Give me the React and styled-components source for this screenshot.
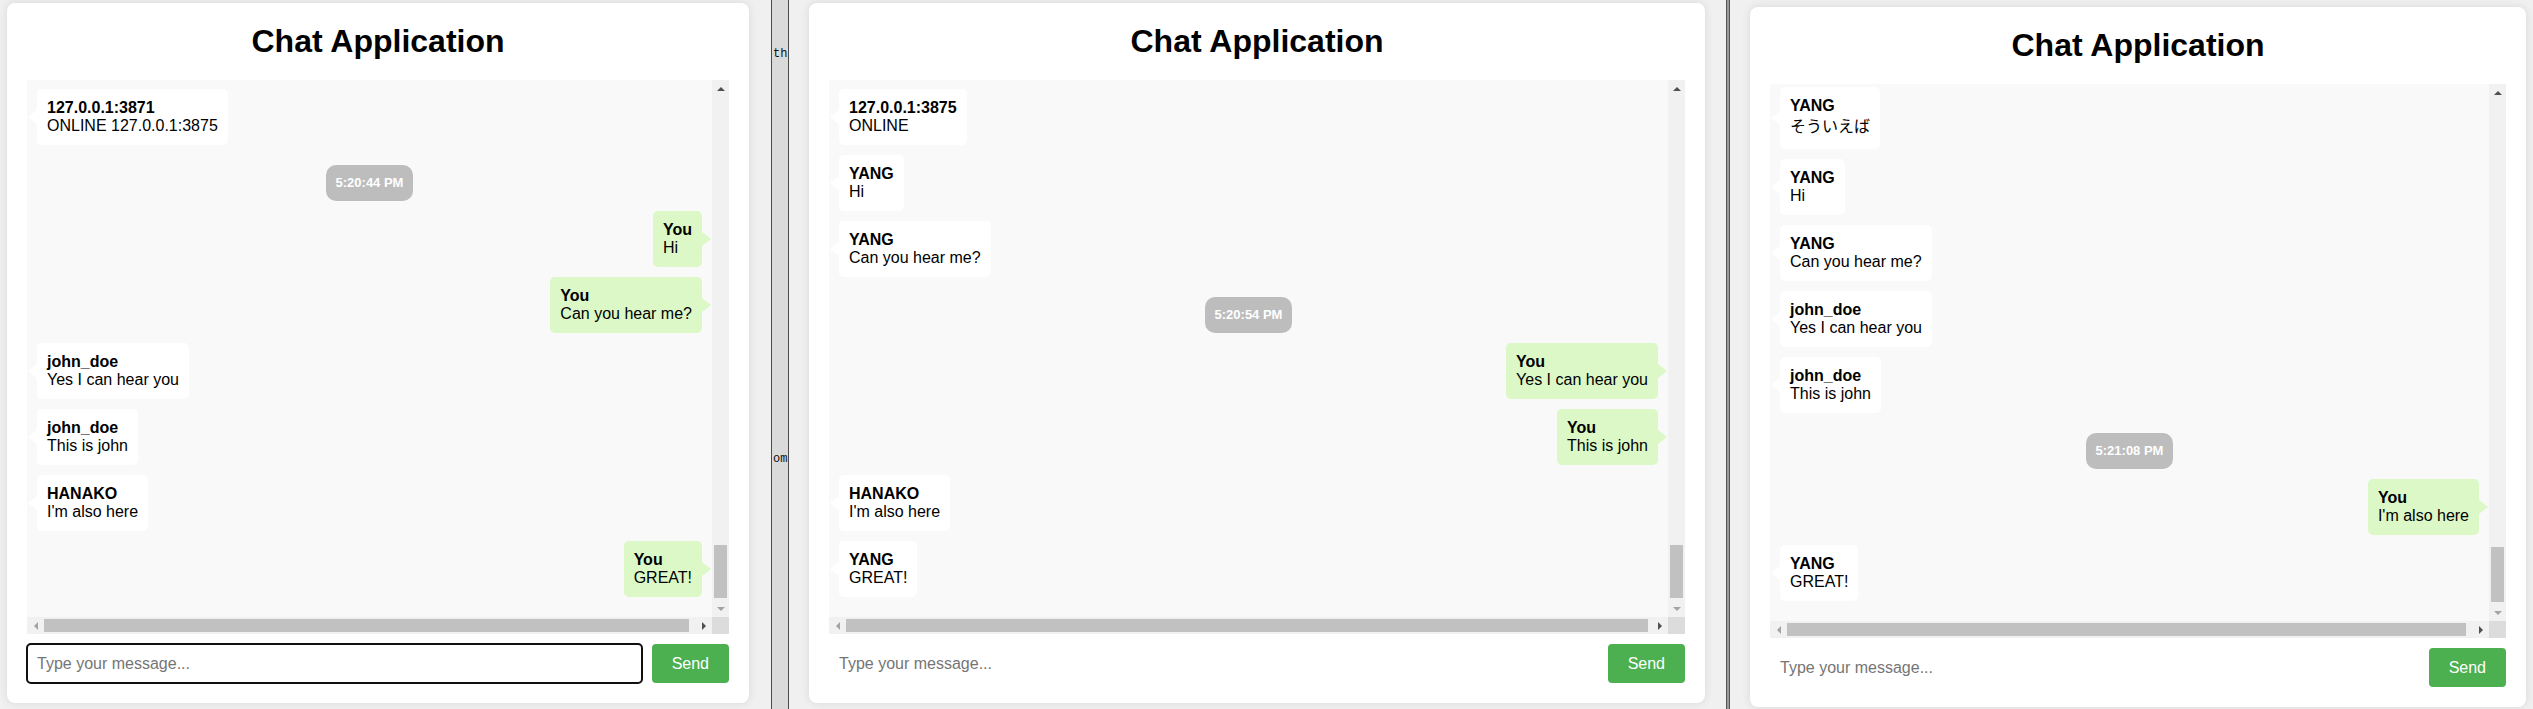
import React from 'react';
import styled, { createGlobalStyle } from 'styled-components';

const GlobalStyle = createGlobalStyle`
  html, body {
    margin: 0;
    padding: 0;
  }
  body {
    font-family: "Liberation Sans", Arial, "Noto Sans CJK JP", sans-serif;
    background: #f0f0f0;
  }
`;

const Desktop = styled.div`
  display: flex;
  width: 2533px;
  height: 709px;
  overflow: hidden;
`;

const Window = styled.div`
  flex: none;
  box-sizing: border-box;
  width: ${p => p.$width}px;
  padding: ${p => p.$top}px 0 0 ${p => p.$left}px;
  background: #f0f0f0;
`;

const EditorStrip = styled.div`
  flex: none;
  box-sizing: border-box;
  width: 18px;
  border-left: 1px solid #4a4a4a;
  border-right: 1px solid #4a4a4a;
  background: #dadada;
  overflow: hidden;
  display: flex;
  flex-direction: column;
  padding: 46px 0 0 1px;
  font-family: "Liberation Mono", "DejaVu Sans Mono", monospace;
  font-size: 12px;
  line-height: 17px;
  color: #111;
  white-space: nowrap;
`;

const Snippet = styled.span`
  margin-top: ${p => p.$gap || 0}px;
`;

const Divider = styled.div`
  flex: none;
  box-sizing: border-box;
  width: 4px;
  border-left: 1px solid #555;
  border-right: 1px solid #555;
  background: #9a9a9a;
`;

const Card = styled.div`
  box-sizing: border-box;
  width: ${p => p.$width}px;
  height: 700px;
  padding: 20px;
  background: #fff;
  border-radius: 8px;
  box-shadow: 0 0 10px rgba(0, 0, 0, 0.1);
  display: flex;
  flex-direction: column;
`;

const Title = styled.h1`
  margin: 0 0 20px;
  font-size: 32px;
  line-height: 37px;
  font-weight: bold;
  text-align: center;
  color: #000;
`;

const ChatBox = styled.div`
  flex: 1;
  min-height: 0;
  display: grid;
  grid-template-columns: 1fr 17px;
  grid-template-rows: 1fr 17px;
  background: #f9f9f9;
`;

const MessageList = styled.div`
  min-height: 0;
  overflow: hidden;
  display: flex;
  flex-direction: column;
  justify-content: flex-end;
  padding: 10px;
`;

const Bubble = styled.div`
  position: relative;
  flex: none;
  align-self: ${p => (p.$mine ? 'flex-end' : 'flex-start')};
  margin-bottom: 10px;
  padding: 10px;
  border-radius: 5px;
  background: ${p => (p.$mine ? '#dcf8c6' : '#fff')};
  font-size: 16px;
  line-height: 18px;
  color: #000;

  &::after {
    content: '';
    position: absolute;
    top: 50%;
    transform: translateY(-50%);
    border-top: 7px solid transparent;
    border-bottom: 7px solid transparent;
    ${p =>
      p.$mine
        ? 'right: -9px; border-left: 9px solid #dcf8c6;'
        : 'left: -9px; border-right: 9px solid #fff;'}
  }
`;

const Sender = styled.div`
  font-weight: bold;
`;

const Text = styled.div`
  line-height: ${p => (p.$cjk ? '24px' : '18px')};
`;

const TimeStamp = styled.div`
  flex: none;
  align-self: center;
  margin: 10px 0;
  padding: 10px;
  border-radius: 10px;
  background: #bdbdbd;
  color: #fff;
  font-size: 13px;
  line-height: 16px;
  font-weight: bold;
`;

const VScroll = styled.div`
  display: flex;
  flex-direction: column;
  background: #f1f1f1;
`;

const HScroll = styled.div`
  display: flex;
  background: #f1f1f1;
`;

const Corner = styled.div`
  background: #dcdcdc;
`;

const ArrowButton = styled.div`
  flex: none;
  width: 17px;
  height: 17px;
  display: flex;
  align-items: center;
  justify-content: center;

  &::before {
    content: '';
    width: 0;
    height: 0;
    ${p => {
      const c = p.$disabled ? '#a3a3a3' : '#505050';
      if (p.$dir === 'up') return `border-left: 4px solid transparent; border-right: 4px solid transparent; border-bottom: 4px solid ${c};`;
      if (p.$dir === 'down') return `border-left: 4px solid transparent; border-right: 4px solid transparent; border-top: 4px solid ${c};`;
      if (p.$dir === 'left') return `border-top: 4px solid transparent; border-bottom: 4px solid transparent; border-right: 4px solid ${c};`;
      return `border-top: 4px solid transparent; border-bottom: 4px solid transparent; border-left: 4px solid ${c};`;
    }}
  }
`;

const VTrack = styled.div`
  flex: 1;
  display: flex;
  flex-direction: column;
  justify-content: flex-end;
  padding: 0 2px 2px;
`;

const VThumb = styled.div`
  height: ${p => p.$size}px;
  background: #c1c1c1;
`;

const HTrack = styled.div`
  flex: 1;
  display: flex;
  padding: 2px ${p => p.$rest}px 2px 0;
`;

const HThumb = styled.div`
  flex: 1;
  background: #c1c1c1;
`;

const Composer = styled.div`
  display: flex;
  gap: 10px;
  margin-top: 10px;
`;

const MessageInput = styled.input`
  flex: 1;
  min-width: 0;
  padding: 10px;
  border: none;
  border-radius: 4px;
  font-family: inherit;
  font-size: 16px;
  line-height: 19px;
  color: #000;
  background: #fff;
  outline: ${p => (p.$focused ? '2px solid #101010' : 'none')};
  outline-offset: -1px;

  &::placeholder {
    color: #757575;
  }
`;

const SendButton = styled.button`
  flex: none;
  padding: 10px 20px;
  border: none;
  border-radius: 4px;
  background: #4caf50;
  color: #fff;
  font-family: inherit;
  font-size: 16px;
  line-height: 18px;
  cursor: pointer;
`;

const panels = [
  {
    win: { width: 771, left: 7, top: 3 },
    card: 742,
    thumb: 53,
    rest: 6,
    focused: true,
    items: [
      { sender: '127.0.0.1:3871', text: 'ONLINE 127.0.0.1:3875' },
      { time: '5:20:44 PM' },
      { mine: true, sender: 'You', text: 'Hi' },
      { mine: true, sender: 'You', text: 'Can you hear me?' },
      { sender: 'john_doe', text: 'Yes I can hear you' },
      { sender: 'john_doe', text: 'This is john' },
      { sender: 'HANAKO', text: "I'm also here" },
      { mine: true, sender: 'You', text: 'GREAT!' },
    ],
  },
  {
    win: { width: 937, left: 20, top: 3 },
    card: 896,
    thumb: 53,
    rest: 3,
    items: [
      { sender: '127.0.0.1:3875', text: 'ONLINE' },
      { sender: 'YANG', text: 'Hi' },
      { sender: 'YANG', text: 'Can you hear me?' },
      { time: '5:20:54 PM' },
      { mine: true, sender: 'You', text: 'Yes I can hear you' },
      { mine: true, sender: 'You', text: 'This is john' },
      { sender: 'HANAKO', text: "I'm also here" },
      { sender: 'YANG', text: 'GREAT!' },
    ],
  },
  {
    win: { width: 803, left: 20, top: 7 },
    card: 776,
    thumb: 55,
    rest: 6,
    items: [
      { sender: 'YANG', text: 'そういえば', cjk: true },
      { sender: 'YANG', text: 'Hi' },
      { sender: 'YANG', text: 'Can you hear me?' },
      { sender: 'john_doe', text: 'Yes I can hear you' },
      { sender: 'john_doe', text: 'This is john' },
      { time: '5:21:08 PM' },
      { mine: true, sender: 'You', text: "I'm also here" },
      { sender: 'YANG', text: 'GREAT!' },
    ],
  },
];

function ChatPanel({ panel }) {
  return (
    <Window $width={panel.win.width} $left={panel.win.left} $top={panel.win.top}>
      <Card $width={panel.card}>
        <Title>Chat Application</Title>
        <ChatBox>
          <MessageList>
            {panel.items.map((m, i) =>
              m.time ? (
                <TimeStamp key={i}>{m.time}</TimeStamp>
              ) : (
                <Bubble key={i} $mine={m.mine}>
                  <Sender>{m.sender}</Sender>
                  <Text $cjk={m.cjk}>{m.text}</Text>
                </Bubble>
              )
            )}
          </MessageList>
          <VScroll>
            <ArrowButton $dir="up" />
            <VTrack>
              <VThumb $size={panel.thumb} />
            </VTrack>
            <ArrowButton $dir="down" $disabled />
          </VScroll>
          <HScroll>
            <ArrowButton $dir="left" $disabled />
            <HTrack $rest={panel.rest}>
              <HThumb />
            </HTrack>
            <ArrowButton $dir="right" />
          </HScroll>
          <Corner />
        </ChatBox>
        <Composer>
          <MessageInput placeholder="Type your message..." $focused={panel.focused} readOnly />
          <SendButton>Send</SendButton>
        </Composer>
      </Card>
    </Window>
  );
}

export default function App() {
  return (
    <>
      <GlobalStyle />
      <Desktop>
        <ChatPanel panel={panels[0]} />
        <EditorStrip>
          <Snippet>th</Snippet>
          <Snippet $gap={388}>om</Snippet>
        </EditorStrip>
        <ChatPanel panel={panels[1]} />
        <Divider />
        <ChatPanel panel={panels[2]} />
      </Desktop>
    </>
  );
}
